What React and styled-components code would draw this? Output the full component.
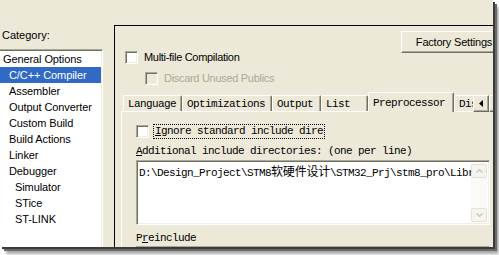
import React from "react";
import styled, { createGlobalStyle } from "styled-components";

const GlobalStyle = createGlobalStyle`
  html, body {
    margin: 0;
    padding: 0;
    background: #ffffff;
  }
  body {
    font-family: "Liberation Sans", Arial, sans-serif;
  }
`;

const Frame = styled.div`
  width: 499px;
  height: 255px;
  overflow: hidden;
  background: #ffffff;
`;

const Dialog = styled.div`
  width: 493px;
  height: 247px;
  display: flex;
  overflow: hidden;
  background: #ece9d8;
  color: #000;
  font: 11px/13px "Liberation Sans", Arial, sans-serif;
  letter-spacing: -0.3px;
  box-shadow: 2px 2px 0 #3a3a3a, 4px 4px 0 #6a6a6a, 6px 7px 3px rgba(0, 0, 0, 0.35);
`;

/* ---------- left: category list ---------- */

const Sidebar = styled.aside`
  width: 103px;
  flex: none;
  display: flex;
  flex-direction: column;
`;

const CategoryLabel = styled.div`
  height: 49px;
  box-sizing: border-box;
  padding: 29px 0 0 2px;
  letter-spacing: 0;
`;

const ListBox = styled.ul`
  flex: 1;
  margin: 0;
  padding: 0;
  list-style: none;
  background: #ffffff;
  border-style: solid;
  border-width: 1px 1px 0 0;
  border-color: #aca899 #ffffff;
  box-shadow: inset 0 1px 0 #716f64, inset -1px 0 0 #f1efe2;
  padding-top: 1px;
  letter-spacing: -0.1px;
`;

const ListItem = styled.li`
  height: 16px;
  line-height: 16px;
  padding-left: ${(p) => 3 + p.$level * 6}px;
  margin-right: 1px;
  white-space: nowrap;
  background: ${(p) => (p.$selected ? "#316ac5" : "transparent")};
  color: ${(p) => (p.$selected ? "#ffffff" : "#000000")};
`;

/* ---------- right: options panel ---------- */

const Main = styled.section`
  flex: 1;
  min-width: 0;
  margin: 25px 0 0 11px;
  border-top: 1px solid #000;
  border-left: 1px solid #000;
  display: flex;
  flex-direction: column;
`;

const Header = styled.div`
  height: 66px;
  flex: none;
  display: grid;
  grid-template-columns: 286px 106px;
`;

const OptionsColumn = styled.div`
  display: flex;
  flex-direction: column;
  gap: 8px;
  padding: 25px 0 0 10px;
`;

const CheckRow = styled.label`
  display: flex;
  align-items: center;
  gap: 6px;
  height: 13px;
  padding-left: ${(p) => (p.$indent ? 20 : 0)}px;
  color: ${(p) => (p.$disabled ? "#aca899" : "#000")};
  white-space: nowrap;
`;

const CheckBox = styled.span`
  width: 13px;
  height: 13px;
  flex: none;
  box-sizing: border-box;
  border-style: solid;
  border-width: 1px;
  border-color: #aca899 #ffffff #ffffff #aca899;
  box-shadow: inset 1px 1px 0 #716f64, inset -1px -1px 0 #f1efe2;
  background: ${(p) => (p.$disabled ? "#ece9d8" : "#ffffff")};
`;

const PushButton = styled.button`
  margin-top: 5px;
  width: 106px;
  height: 22px;
  padding: 0;
  background: #ece9d8;
  border-style: solid;
  border-width: 1px;
  border-color: #ffffff #716f64 #716f64 #ffffff;
  box-shadow: inset -1px -1px 0 #aca899;
  font: inherit;
  letter-spacing: -0.2px;
  color: #000;
  text-align: center;
  white-space: nowrap;
`;

/* ---------- tabs ---------- */

const TabStrip = styled.div`
  position: relative;
  height: 19px;
  flex: none;
  display: flex;
  align-items: flex-end;
  padding-left: 8px;
  font: 11px/16px "Liberation Mono", "Noto Sans CJK SC", monospace;
  letter-spacing: -0.6px;
`;

const Tab = styled.div`
  flex: none;
  box-sizing: border-box;
  width: ${(p) => p.$w}px;
  height: ${(p) => (p.$active ? 20 : 16)}px;
  margin-bottom: ${(p) => (p.$active ? -1 : 0)}px;
  padding: ${(p) => (p.$active ? "2px 0 0 4px" : "0 0 0 4px")};
  background: #ece9d8;
  border-top: 1px solid #ffffff;
  border-left: 1px solid #ffffff;
  border-right: 1px solid #716f64;
  box-shadow: inset -1px 0 0 #aca899;
  border-radius: 2px 2px 0 0;
  white-space: nowrap;
  overflow: hidden;
  position: relative;
  z-index: ${(p) => (p.$active ? 1 : 0)};
`;

const TabScroller = styled.div`
  position: absolute;
  left: 358px;
  top: 3px;
  display: flex;
  z-index: 2;
`;

const ScrollBtn = styled.div`
  width: 16px;
  height: 17px;
  box-sizing: border-box;
  display: flex;
  align-items: center;
  justify-content: center;
  background: #ece9d8;
  border-style: solid;
  border-width: 1px;
  border-color: #ffffff #716f64 #716f64 #ffffff;
  box-shadow: inset -1px -1px 0 #aca899;
`;

const TabPage = styled.div`
  flex: 1;
  margin-left: 6px;
  border-top: 1px solid #ffffff;
  border-left: 1px solid #ffffff;
  padding: 12px 0 0 14px;
  display: flex;
  flex-direction: column;
  font: 11px/13px "Liberation Mono", "Noto Sans CJK SC", monospace;
  letter-spacing: -0.6px;
`;

const FocusRow = styled.div`
  display: flex;
  align-items: center;
  gap: 4px;
  height: 15px;
`;

const FocusLabel = styled.span`
  height: 13px;
  padding: 0 1px;
  border: 1px dotted #000;
  white-space: nowrap;
`;

const FieldLabel = styled.div`
  margin-top: ${(p) => p.$gap}px;
  height: 13px;
  white-space: nowrap;
`;

const SunkenBox = styled.div`
  margin-top: ${(p) => p.$gap}px;
  width: 354px;
  height: ${(p) => p.$h}px;
  flex: none;
  box-sizing: border-box;
  display: flex;
  background: #ffffff;
  border-style: solid;
  border-width: 1px;
  border-color: #aca899 #ffffff #ffffff #aca899;
  box-shadow: inset 1px 1px 0 #716f64, inset -1px -1px 0 #f1efe2;
  padding: 2px;
`;

const EditText = styled.div`
  flex: 1;
  min-width: 0;
  overflow: hidden;
  white-space: nowrap;
  padding: 2px 0 0 0;
  line-height: 12px;
`;

const Cjk = styled.span`
  font-family: "Noto Sans CJK SC", sans-serif;
  font-size: 12px;
  letter-spacing: -0.2px;
`;

const ScrollBar = styled.div`
  width: 16px;
  flex: none;
  display: flex;
  flex-direction: column;
  justify-content: space-between;
  background: #fbfaf6;
  padding-top: 1px;
`;

const ScrollArrow = styled.div`
  width: 16px;
  height: 14px;
  box-sizing: border-box;
  border: 1px solid #e3e0d4;
  border-radius: 2px;
  background: #f5f4ee;
  display: flex;
  align-items: center;
  justify-content: center;
`;

const SideButton = styled.div`
  width: 16px;
  flex: none;
  box-sizing: border-box;
  background: #ece9d8;
  border-left: 1px solid #716f64;
  border-top: 1px solid #ffffff;
  margin: -2px -2px 0 auto;
`;

const Chevron = ({ up }) => (
  <svg width="7" height="4" viewBox="0 0 7 4">
    <path
      d={up ? "M0.5 3.5 L3.5 0.5 L6.5 3.5" : "M0.5 0.5 L3.5 3.5 L6.5 0.5"}
      fill="none"
      stroke="#c9c7ba"
      strokeWidth="1.3"
    />
  </svg>
);

const LeftArrow = () => (
  <svg width="4" height="7" viewBox="0 0 4 7">
    <polygon points="4,0 0,3.5 4,7" fill="#000" />
  </svg>
);

const categories = [
  { name: "General Options", level: 0 },
  { name: "C/C++ Compiler", level: 1, selected: true },
  { name: "Assembler", level: 1 },
  { name: "Output Converter", level: 1 },
  { name: "Custom Build", level: 1 },
  { name: "Build Actions", level: 1 },
  { name: "Linker", level: 1 },
  { name: "Debugger", level: 1 },
  { name: "Simulator", level: 2 },
  { name: "STice", level: 2 },
  { name: "ST-LINK", level: 2 },
];

const tabs = [
  { label: "Language", w: 59 },
  { label: "Optimizations", w: 90 },
  { label: "Output", w: 49 },
  { label: "List", w: 47 },
  { label: "Preprocessor", w: 86, active: true },
  { label: "Dis", w: 40 },
];

export default function App() {
  return (
    <Frame>
      <GlobalStyle />
      <Dialog>
        <Sidebar>
          <CategoryLabel>Category:</CategoryLabel>
          <ListBox>
            {categories.map((c) => (
              <ListItem key={c.name} $level={c.level} $selected={c.selected}>
                {c.name}
              </ListItem>
            ))}
          </ListBox>
        </Sidebar>

        <Main>
          <Header>
            <OptionsColumn>
              <CheckRow>
                <CheckBox />
                Multi-file Compilation
              </CheckRow>
              <CheckRow $indent $disabled>
                <CheckBox $disabled />
                Discard Unused Publics
              </CheckRow>
            </OptionsColumn>
            <PushButton>Factory Settings</PushButton>
          </Header>

          <TabStrip>
            {tabs.map((t) => (
              <Tab key={t.label} $w={t.w} $active={t.active}>
                {t.label}
              </Tab>
            ))}
            <TabScroller>
              <ScrollBtn>
                <LeftArrow />
              </ScrollBtn>
              <ScrollBtn />
            </TabScroller>
          </TabStrip>

          <TabPage>
            <FocusRow>
              <CheckBox />
              <FocusLabel>
                <u>I</u>gnore standard include dire
              </FocusLabel>
            </FocusRow>
            <FieldLabel $gap={6}>
              <u>A</u>dditional include directories: (one per line)
            </FieldLabel>
            <SunkenBox $gap={2} $h={65}>
              <EditText>
                D:\Design_Project\STM8<Cjk>软硬件设计</Cjk>\STM32_Prj\stm8_pro\Libr
              </EditText>
              <ScrollBar>
                <ScrollArrow>
                  <Chevron up />
                </ScrollArrow>
                <ScrollArrow>
                  <Chevron />
                </ScrollArrow>
              </ScrollBar>
            </SunkenBox>
            <FieldLabel $gap={7}>
              P<u>r</u>einclude
            </FieldLabel>
            <SunkenBox $gap={1} $h={20}>
              <SideButton />
            </SunkenBox>
          </TabPage>
        </Main>
      </Dialog>
    </Frame>
  );
}
